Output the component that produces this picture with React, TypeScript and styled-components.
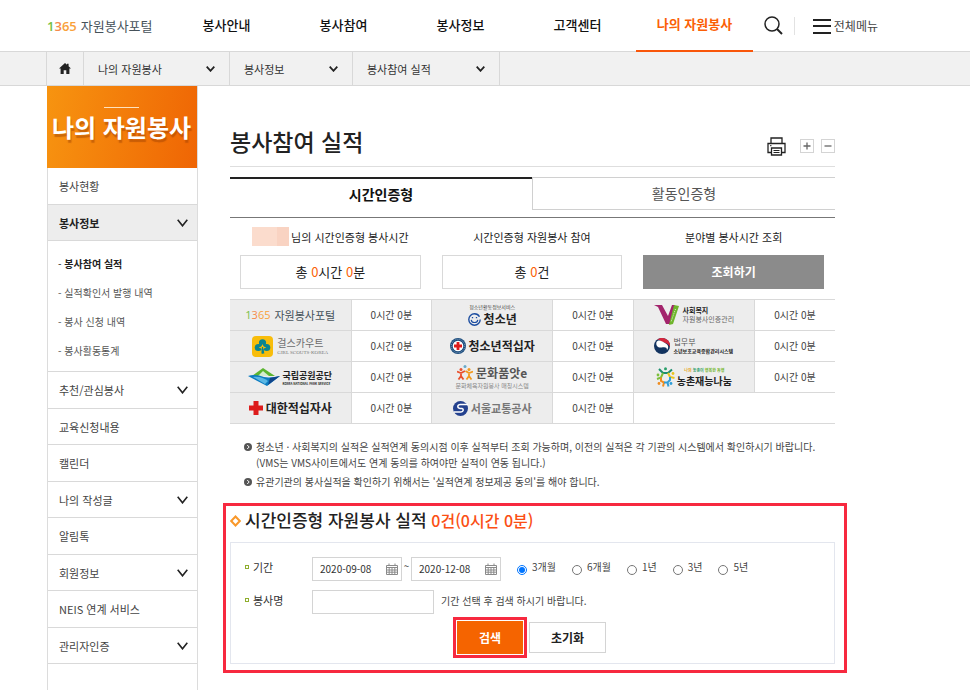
import React from 'react';
import styled, { createGlobalStyle } from 'styled-components';

const GlobalStyle = createGlobalStyle`
  *, *::before, *::after { box-sizing: border-box; }
  html, body { margin: 0; padding: 0; background: #fff; }
  body {
    font-family: 'Noto Sans CJK KR', 'Noto Sans', sans-serif;
    font-size: 11px;
    line-height: 16px;
    color: #444;
    overflow: hidden;
  }
  button, input { font: inherit; color: inherit; margin: 0; }
  button { padding: 0; border: 0; background: none; cursor: pointer; }
  a { color: inherit; text-decoration: none; }
  ul { margin: 0; padding: 0; list-style: none; }
  h1, h2, p { margin: 0; }
  svg { display: block; flex: none; }
`;

const Page = styled.div`
  height: 100vh;
  overflow: hidden;
  display: flex;
  flex-direction: column;
`;

/* ---------- header ---------- */

const Header = styled.header`
  display: flex;
  height: 51px;
  flex: none;
  padding: 0 92px 0 47px;
`;

const HomeLink = styled.a`
  display: flex;
  align-items: center;
  width: 121px;
`;

const Wordmark = styled.span<{ $small?: boolean }>`
  display: flex;
  align-items: center;
  gap: 4px;
  font-size: ${(p) => (p.$small ? 11 : 13)}px;
  line-height: 20px;
  font-weight: 400;
  color: #46525a;
  white-space: nowrap;
`;

const WordmarkDigits = styled.span<{ $small?: boolean }>`
  font-family: 'Open Sans', 'Noto Sans', sans-serif;
  font-size: ${(p) => (p.$small ? 11 : 13)}px;
  font-weight: ${(p) => (p.$small ? 400 : 600)};
  color: #f9a13b;
  i { font-style: normal; }
  i:nth-child(1) { color: #76c043; }
  i:nth-child(2) { color: #f58a4b; }
`;

const MainNav = styled.nav`
  display: flex;
  flex: 1;
`;

const NavLink = styled.a<{ $active?: boolean }>`
  flex: 1;
  height: 52px;
  line-height: ${(p) => (p.$active ? 48 : 50)}px;
  text-align: center;
  font-size: 13px;
  font-weight: ${(p) => (p.$active ? 700 : 500)};
  color: ${(p) => (p.$active ? '#fb5f06' : '#111')};
  border-bottom: 2px solid ${(p) => (p.$active ? '#f9560a' : 'transparent')};
  position: relative;
`;

const HeaderTools = styled.div`
  display: flex;
  align-items: center;
  justify-content: space-between;
  width: 125px;
  padding-left: 11px;
`;

const Divider = styled.span`
  width: 1px;
  height: 18px;
  background: #e2e2e2;
  margin-right: 6px;
`;

const AllMenu = styled.button`
  display: flex;
  align-items: center;
  gap: 3px;
  font-size: 12px;
  color: #444;
  white-space: nowrap;
`;

/* ---------- breadcrumb ---------- */

const Crumbs = styled.nav`
  display: flex;
  flex: none;
  height: 35px;
  padding-left: 46px;
  background: #f1f1f1;
  border-top: 1px solid #d8d8d8;
  border-bottom: 1px solid #d8d8d8;
`;

const CrumbHome = styled.a`
  display: flex;
  align-items: center;
  justify-content: center;
  width: 37px;
  border-left: 1px solid #d8d8d8;
`;

const Crumb = styled.button<{ $width: number }>`
  display: flex;
  align-items: center;
  justify-content: space-between;
  width: ${(p) => p.$width}px;
  padding: 0 14px;
  border-left: 1px solid #d8d8d8;
  color: #333;
  &:last-child { border-right: 1px solid #d8d8d8; }
`;

/* ---------- body ---------- */

const Body = styled.div`
  display: flex;
  flex: 1;
  min-height: 0;
  padding: 0 135px 0 47px;
`;

const Sidebar = styled.aside`
  width: 151px;
  flex: none;
  border: solid #dcdcdc;
  border-width: 0 1px;
`;

const Banner = styled.h2`
  display: flex;
  flex-direction: column;
  align-items: center;
  height: 82px;
  margin: 0 0 0 -1px;
  padding: 21px 1px 0 0;
  font-size: 24px;
  line-height: 38px;
  font-weight: 700;
  color: #fff;
  white-space: nowrap;
  text-shadow: 1px 3px 1px rgba(150, 60, 0, 0.45);
  background: linear-gradient(100deg, #f79410, #ef6504);
  &::before {
    content: '';
    width: 35px;
    height: 1px;
    background: #ffe2bd;
  }
`;

const SideItem = styled.li`
  border-bottom: 1px solid #d9d9d9;
  &:nth-child(odd) > a { height: 36px; }
`;

const SideLink = styled.a<{ $active?: boolean }>`
  display: flex;
  align-items: center;
  justify-content: space-between;
  height: 35px;
  padding: 0 9px 0 11px;
  font-weight: ${(p) => (p.$active ? 700 : 400)};
  color: ${(p) => (p.$active ? '#222' : '#444')};
  background: ${(p) => (p.$active ? '#ededed' : '#fff')};
`;

const SubList = styled.ul`
  padding: 8px 10px 6px;
  border-top: 1px solid #d9d9d9;
`;

const SubLink = styled.a<{ $active?: boolean }>`
  display: block;
  font-size: 10px;
  line-height: 29px;
  font-weight: ${(p) => (p.$active ? 700 : 400)};
  color: ${(p) => (p.$active ? '#222' : '#555')};
  white-space: nowrap;
  &::before { content: '- '; font-weight: 400; }
`;

const Main = styled.main`
  flex: 1;
  min-width: 0;
  padding-left: 32px;
`;

const TitleBar = styled.div`
  display: flex;
  justify-content: space-between;
  height: 81px;
  padding-top: 38px;
  border-bottom: 1px solid #dedede;
`;

const PageTitle = styled.h1`
  font-size: 23px;
  line-height: 34px;
  font-weight: 500;
  color: #222;
`;

const Tools = styled.div`
  display: flex;
  align-items: center;
  height: 44px;
  gap: 7px;
`;

const PrintButton = styled.button`
  margin-right: 7px;
`;

const ZoomButton = styled.button`
  display: flex;
  align-items: center;
  justify-content: center;
  width: 14px;
  height: 14px;
  border: 1px solid #d4d4d4;
  color: #666;
`;

const Tabs = styled.div`
  display: flex;
  align-items: flex-start;
  height: 41px;
  margin-top: 10px;
  border-bottom: 1px solid #777;
`;

const Tab = styled.button<{ $active?: boolean }>`
  flex: 1;
  height: 33px;
  padding-bottom: 2px;
  font-size: 14px;
  line-height: 20px;
  font-weight: ${(p) => (p.$active ? 700 : 400)};
  color: ${(p) => (p.$active ? '#111' : '#555')};
  border: solid ${(p) => (p.$active ? '#222' : '#d0d0d0')};
  border-width: ${(p) => (p.$active ? '2px 0 0' : '1px 0 1px 1px')};
`;

const Summary = styled.div`
  display: grid;
  grid-template-columns: repeat(3, 1fr);
  padding: 9px 0 10px;
`;

const SummaryColumn = styled.div`
  padding: 0 11px 0 10px;
  text-align: center;
`;

const SummaryLabel = styled.p`
  display: flex;
  align-items: center;
  justify-content: center;
  height: 19px;
  color: #222;
  white-space: nowrap;
`;

const MaskedName = styled.span`
  width: 37px;
  height: 19px;
  margin-right: 2px;
  background: linear-gradient(90deg, #fbdccd 68%, #f9d3c2 68%);
`;

const SummaryValue = styled.p`
  height: 34px;
  margin-top: 9px;
  border: 1px solid #d9d9d9;
  font-size: 13px;
  line-height: 32px;
  color: #222;
  em { font-style: normal; color: #fb5f06; }
`;

const LookupButton = styled.button`
  display: block;
  width: 100%;
  height: 34px;
  margin-top: 9px;
  background: #8b8b8b;
  color: #fff;
  font-size: 12px;
  font-weight: 700;
`;

const AgencyTable = styled.table`
  width: 100%;
  table-layout: fixed;
  border-collapse: collapse;
  border-bottom: 1px solid #c8c8c8;
  th, td {
    height: 31px;
    padding: 0;
    border: 1px solid #d9d9d9;
  }
  th { background: #ededed; font-weight: 400; }
  td { font-size: 10px; text-align: center; color: #444; }
  tr > :first-child { border-left: 0; }
  tr > :last-child { border-right: 0; }
`;

const LogoCol = styled.col`
  width: 20%;
`;

const BrandLine = styled.span<{ $gap?: number }>`
  display: flex;
  align-items: center;
  justify-content: center;
  gap: ${(p) => p.$gap ?? 3}px;
`;

const Brand = styled(BrandLine)`
  height: 30px;
`;

const BrandStack = styled.span<{ $center?: boolean }>`
  display: flex;
  flex-direction: column;
  align-items: ${(p) => (p.$center ? 'center' : 'flex-start')};
`;

const BrandText = styled.span<{ $size: number; $line: number; $weight?: number; $color?: string; $serif?: boolean }>`
  font-size: ${(p) => p.$size}px;
  line-height: ${(p) => p.$line}px;
  font-weight: ${(p) => p.$weight ?? 400};
  color: ${(p) => p.$color ?? '#222'};
  font-family: ${(p) => (p.$serif ? "'Liberation Serif', serif" : 'inherit')};
  white-space: nowrap;
`;

const Slogan = styled(BrandText)`
  i { font-style: normal; }
  i:nth-child(1) { color: #e8a61c; }
  i:nth-child(2) { color: #2ca06a; }
`;

const Notices = styled.ul`
  padding: 15px 0 13px 14px;
  font-size: 10px;
  color: #444;
`;

const Notice = styled.li`
  display: flex;
  gap: 4px;
  & + & { margin-top: 3px; }
  svg { margin-top: 4px; }
`;

const Highlight = styled.section`
  margin: 0 -12px 0 -7px;
  border: 3px solid #f7293f;
  padding: 0 9px 6px 4px;
`;

const ResultTitle = styled.h2`
  display: flex;
  align-items: center;
  gap: 4px;
  height: 29px;
  font-size: 17px;
  line-height: 24px;
  font-weight: 500;
  color: #222;
  white-space: nowrap;
  span { padding-bottom: 2px; }
  em { font-style: normal; font-size: 16px; color: #fb4f14; }
`;

const SearchForm = styled.form`
  margin-top: 7px;
  border: 1px solid #e3e6ee;
  padding: 14px 14px 5px;
`;

const FormRow = styled.div`
  display: flex;
  align-items: center;
  height: 24px;
  & + & { margin-top: 9px; }
`;

const FieldLabel = styled.label`
  display: flex;
  align-items: center;
  gap: 4px;
  width: 67px;
  flex: none;
  padding-bottom: 4px;
  color: #333;
  &::before {
    content: '';
    flex: none;
    width: 4px;
    height: 4px;
    border: 1px solid #8fae2e;
  }
`;

const DateBox = styled.span`
  display: flex;
  align-items: center;
  justify-content: space-between;
  flex: none;
  width: 90px;
  height: 24px;
  padding: 0 3px 0 7px;
  border: 1px solid #d4d4d4;
  input {
    width: 60px;
    padding: 0;
    border: 0;
    outline: 0;
    font-size: 10px;
    color: #333;
  }
`;

const Tilde = styled.span`
  width: 9px;
  text-align: center;
  font-size: 10px;
  line-height: 10px;
  align-self: flex-start;
  margin-top: 4px;
`;

const Periods = styled.div`
  display: flex;
  gap: 16px;
  margin-left: 16px;
  padding-bottom: 2px;
  font-size: 10px;
`;

const Period = styled.label`
  display: flex;
  align-items: center;
  gap: 5px;
  white-space: nowrap;
  input {
    width: 10px;
    height: 10px;
    margin-top: 4px;
  }
  span { margin-top: -2px; }
`;

const NameInput = styled.input`
  width: 122px;
  height: 24px;
  padding: 0 6px;
  border: 1px solid #d4d4d4;
`;

const Hint = styled.span`
  margin-left: 7px;
  padding-bottom: 2px;
  font-size: 10px;
`;

const Actions = styled.div`
  display: flex;
  align-items: center;
  justify-content: center;
  gap: 2px;
  margin: 3px 6px 0 0;
`;

const SubmitFrame = styled.span`
  border: 3px solid #f7293f;
  padding: 1px;
`;

const SubmitButton = styled.button`
  display: block;
  width: 66px;
  height: 33px;
  background: #f56400;
  color: #fff;
  font-size: 12px;
  font-weight: 700;
`;

const ResetButton = styled.button`
  width: 77px;
  height: 31px;
  border: 1px solid #d4d4d4;
  color: #222;
  font-size: 12px;
  font-weight: 700;
`;

/* ---------- icons ---------- */

const SearchIcon = () => (
  <svg width="19" height="19" viewBox="0 0 19 19" fill="none" stroke="#222" strokeWidth="1.5">
    <circle cx="8" cy="8" r="7" />
    <path d="M13 13l5 5" strokeWidth="2" />
  </svg>
);

const MenuIcon = () => (
  <svg width="18" height="16" viewBox="0 0 18 16" fill="#222">
    <path d="M0 1h18v2H0zM0 7h18v2H0zM0 14h18v2H0z" />
  </svg>
);

const HomeIcon = () => (
  <svg width="12" height="11" viewBox="0 0 12 11" fill="#222">
    <path d="M6 0l2 1.8V.8h1.6v2.4L12 5.6h-1.600V11H7.300V7.200H4.700V11H1.600V5.600H0z" />
  </svg>
);

const Chevron = ({ w = 9, h = 6, stroke = 1.8 }: { w?: number; h?: number; stroke?: number }) => (
  <svg width={w} height={h} viewBox={`0 0 ${w} ${h}`} fill="none" stroke="#222" strokeWidth={stroke}>
    <path d={`M.7 .7L${w / 2} ${h - 1.2}L${w - 0.7} .7`} />
  </svg>
);

const PrintIcon = () => (
  <svg width="19" height="19" viewBox="0 0 19 19" fill="none" stroke="#222" strokeWidth="1.3">
    <path d="M4 6.5V1h11v5.5M4.500 15.500H1V6.500h17v9h-3.500" />
    <path d="M4.500 11h10v7h-10z" />
    <path d="M6.500 13.500h6M6.500 15.500h6M3 8.700h1.500" strokeWidth="1" />
  </svg>
);

const PlusIcon = ({ minus }: { minus?: boolean }) => (
  <svg width="8" height="8" viewBox="0 0 8 8" stroke="currentColor" strokeWidth="1.300">
    <path d={minus ? 'M.5 4h7' : 'M.5 4h7M4 .5v7'} />
  </svg>
);

const BulletIcon = () => (
  <svg width="8" height="8" viewBox="0 0 8 8">
    <circle cx="4" cy="4" r="4" fill="#555" />
    <path d="M3.200 2l2 2-2 2" fill="none" stroke="#fff" strokeWidth="1" />
  </svg>
);

const DiamondIcon = () => (
  <svg width="11" height="12" viewBox="0 0 11 12">
    <path d="M5.500 1.500L9.800 6 5.500 10.500 1.200 6z" fill="#fff" stroke="#f9982a" strokeWidth="2" />
  </svg>
);

const CalendarIcon = () => (
  <svg width="12" height="12" viewBox="0 0 12 12" fill="none" stroke="#8a8a8a" strokeWidth="1">
    <path d="M.5 2.500h11v9H.5zM.5 4.500h11M.5 7h11M.5 9.200h11M3.200 4.500v7M6 4.500v7M8.800 4.500v7M3 .5v2M9 .5v2" />
  </svg>
);

const ScoutIcon = () => (
  <svg width="21" height="21" viewBox="0 0 21 21">
    <rect width="21" height="21" rx="4" fill="#f8bd0b" />
    <g fill="#0b8590">
      <circle cx="10.500" cy="6.800" r="3.600" />
      <circle cx="6.300" cy="11.500" r="3.600" />
      <circle cx="14.700" cy="11.500" r="3.600" />
      <path d="M9.700 11h1.600l1 6.500H9.500z" />
    </g>
    <path d="M10.500 8l1.200 2.600 2.600 1-2.600.8-1.200 1.800-1.200-1.800-2.600-.8 2.600-1z" fill="#f8bd0b" />
    <path d="M10.500 11v6.500" stroke="#0b8590" strokeWidth="1.200" />
  </svg>
);

const MountainIcon = () => (
  <svg width="32" height="18" viewBox="0 0 32 18">
    <path d="M4 8L15 0l12 8z" fill="#5cb531" />
    <path d="M10 8l5-5 6 5z" fill="#d5ecd0" />
    <path d="M0 8c5-2 11-1 16 1 5 1 11 0 16-1L19 18z" fill="#0c7cc1" />
    <path d="M5 9c6-1 11 1 15 4l-3 3z" fill="#5ab7e4" />
    <path d="M22 10l10-2-12 9z" fill="#10458a" />
  </svg>
);

const CrossIcon = () => (
  <svg width="14" height="14" viewBox="0 0 14 14" fill="#dd1c1c">
    <path d="M4.500 0h5v4.500H14v5H9.500V14h-5V9.500H0v-5h4.500z" />
  </svg>
);

const SmileIcon = () => (
  <svg width="13" height="13" viewBox="0 0 13 13" fill="none" stroke="#1c4da0">
    <circle cx="6.500" cy="6.500" r="5.700" strokeWidth="1.400" strokeDasharray="32 4" />
    <path d="M3.200 6.800c.6 3.600 6 3.600 6.600 0" strokeWidth="1.200" />
    <path d="M4.500 4v1.200M8.500 4v1.200" strokeWidth="1.300" />
  </svg>
);

const JuniorCrossIcon = () => (
  <svg width="16" height="16" viewBox="0 0 16 16">
    <circle cx="8" cy="8" r="8" fill="#1a4b7d" />
    <circle cx="8" cy="8" r="6.700" fill="none" stroke="#8ba7c2" strokeWidth="1" strokeDasharray="1 1" />
    <circle cx="8" cy="8" r="5.300" fill="#fff" />
    <path d="M6.600 4h2.800v2.600H12v2.800H9.400V12H6.600V9.400H4V6.600h2.600z" fill="#dd1c1c" />
  </svg>
);

const CultureIcon = () => (
  <svg width="16" height="15" viewBox="0 0 16 15" fill="none" strokeWidth="1.800">
    <circle cx="8" cy="1.600" r="1.500" fill="#68aacb" />
    <circle cx="4" cy="4.500" r="1.500" fill="#e9512e" />
    <circle cx="12" cy="4.500" r="1.500" fill="#f29a1f" />
    <path d="M0 6.500l4 1.500 4-2M4 8v3l-2.500 3.500M4 11l2.500 3.500" stroke="#e9512e" />
    <path d="M8.500 6l3.500 2 4-1.500M12 8v3l-2.500 3.500M12 11l2.500 3.500" stroke="#f29a1f" />
  </svg>
);

const MetroIcon = () => (
  <svg width="15" height="15" viewBox="0 0 15 15">
    <circle cx="7.500" cy="7.500" r="7.500" fill="#24418e" />
    <path d="M15 3.500H7.500C4 3.500 4 7 7 7.500h2c2 .5 1.500 3.500-1 3.500H1" fill="none" stroke="#fff" strokeWidth="1.500" />
  </svg>
);

const VolunteerIcon = () => (
  <svg width="26" height="20" viewBox="0 0 26 20">
    <path d="M0 0h8l6 11 4-11h3l-5 19h-4L4 2z" fill="#a3246c" />
    <path d="M20 0l5 1-6 18-4 1z" fill="#6fb52c" />
    <path d="M21.500 4l-4.500 13" stroke="#e1f0cf" strokeWidth="1" strokeDasharray="1 1" />
  </svg>
);

const TaegeukIcon = () => (
  <svg width="16" height="16" viewBox="0 0 16 16">
    <circle cx="8" cy="8" r="8" fill="#12335f" />
    <path d="M3 1.800A8 8 0 0 1 16 9C14 4 9 5 7 3.200 5.500 1.800 4 1.500 3 1.800z" fill="#d4273e" />
    <path d="M2.500 4C5 1 8 3.500 10 4.500 14 6 15.500 9 13 12 13 8.500 10 9 7.500 9.500 4 10 1.500 7.500 2.500 4z" fill="#fff" />
  </svg>
);

const VillageIcon = () => (
  <svg width="19" height="20" viewBox="0 0 19 20" fill="none" strokeWidth="2">
    <circle cx="9.500" cy="1.700" r="1.500" fill="#2ca06a" />
    <circle cx="2" cy="8" r="1.400" fill="#7bbf3a" />
    <circle cx="17" cy="6.500" r="1.400" fill="#e9c51d" />
    <circle cx="3" cy="16.500" r="1.400" fill="#f08c1e" />
    <circle cx="15" cy="16.500" r="1.400" fill="#2f9ed8" />
    <path d="M3 2l4 4h5l4-3.500" stroke="#1d8f6e" />
    <path d="M1 12l4-1.500L7 6" stroke="#7bbf3a" />
    <path d="M12 6l2 4 4.500 1" stroke="#e9c51d" />
    <path d="M5 10.500V14l3 1.500-1 4" stroke="#f08c1e" />
    <path d="M8 15.500h3.500L14 13v-3M11.500 15.500l1 4" stroke="#2f9ed8" />
  </svg>
);

/* ---------- data ---------- */

const PortalLogo = ({ small }: { small?: boolean }) => (
  <Wordmark $small={small}>
    <WordmarkDigits $small={small}>
      <i>1</i><i>3</i>65
    </WordmarkDigits>
    자원봉사포털
  </Wordmark>
);

const agencies: React.ReactNode[][] = [
  [
    <Brand key="portal"><PortalLogo small /></Brand>,
    <Brand key="youth">
      <BrandStack $center>
        <BrandText $size={5} $line={8} $color="#444">청소년활동정보서비스</BrandText>
        <BrandLine>
          <SmileIcon />
          <BrandText $size={12} $line={16} $weight={700}>청소년</BrandText>
        </BrandLine>
      </BrandStack>
    </Brand>,
    <Brand key="welfare">
      <VolunteerIcon />
      <BrandStack>
        <BrandText $size={7} $line={9} $weight={700}>사회복지</BrandText>
        <BrandText $size={7} $line={9} $color="#666">자원봉사인증관리</BrandText>
      </BrandStack>
    </Brand>,
  ],
  [
    <Brand key="scout" $gap={4}>
      <ScoutIcon />
      <BrandStack>
        <BrandText $size={10} $line={14} $color="#6b6b6b">걸스카우트</BrandText>
        <BrandText $size={5} $line={6} $color="#777" $serif>GIRL SCOUTS·KOREA</BrandText>
      </BrandStack>
    </Brand>,
    <Brand key="junior"><JuniorCrossIcon /><BrandText $size={12} $line={16} $weight={700}>청소년적십자</BrandText></Brand>,
    <Brand key="justice">
      <TaegeukIcon />
      <BrandStack>
        <BrandText $size={8} $line={10} $color="#555">법무부</BrandText>
        <BrandText $size={5} $line={8} $weight={700}>소년보호교육종합관리시스템</BrandText>
      </BrandStack>
    </Brand>,
  ],
  [
    <Brand key="park" $gap={2}>
      <MountainIcon />
      <BrandStack>
        <BrandText $size={9} $line={13} $weight={700}>국립공원공단</BrandText>
        <BrandText $size={3} $line={4} $weight={700}>KOREA NATIONAL PARK SERVICE</BrandText>
      </BrandStack>
    </Brand>,
    <Brand key="culture">
      <BrandStack $center>
        <BrandLine>
          <CultureIcon />
          <BrandText $size={12} $line={16} $weight={700} $color="#555">문화품앗e</BrandText>
        </BrandLine>
        <BrandText $size={6} $line={9} $color="#888">문화체육자원봉사 매칭시스템</BrandText>
      </BrandStack>
    </Brand>,
    <Brand key="village" $gap={2}>
      <VillageIcon />
      <BrandStack $center>
        <Slogan $size={4} $line={6} $weight={700} $color="#74b52b"><i>나의</i> <i>농촌이</i> 행복한 동행</Slogan>
        <BrandText $size={10} $line={15} $weight={700}>농촌재능나눔</BrandText>
      </BrandStack>
    </Brand>,
  ],
  [
    <Brand key="redcross"><CrossIcon /><BrandText $size={12} $line={16} $weight={700}>대한적십자사</BrandText></Brand>,
    <Brand key="metro"><MetroIcon /><BrandText $size={11} $line={16} $weight={700} $color="#777">서울교통공사</BrandText></Brand>,
  ],
];

const sideMenu: { label: string; arrow?: boolean; sub?: string[] }[] = [
  { label: '봉사현황' },
  { label: '봉사정보', arrow: true, sub: ['봉사참여 실적', '실적확인서 발행 내역', '봉사 신청 내역', '봉사활동통계'] },
  { label: '추천/관심봉사', arrow: true },
  { label: '교육신청내용' },
  { label: '캘린더' },
  { label: '나의 작성글', arrow: true },
  { label: '알림톡' },
  { label: '회원정보', arrow: true },
  { label: 'NEIS 연계 서비스' },
  { label: '관리자인증', arrow: true },
];

const crumbs = [
  { label: '나의 자원봉사', width: 146 },
  { label: '봉사정보', width: 123 },
  { label: '봉사참여 실적', width: 148 },
];

const periods = ['3개월', '6개월', '1년', '3년', '5년'];

export default function App() {
  return (
    <Page lang="ko">
      <GlobalStyle />
      <Header>
        <HomeLink href="#"><PortalLogo /></HomeLink>
        <MainNav>
          {['봉사안내', '봉사참여', '봉사정보', '고객센터'].map((n) => <NavLink key={n} href="#">{n}</NavLink>)}
          <NavLink href="#" $active>나의 자원봉사</NavLink>
        </MainNav>
        <HeaderTools>
          <button type="button" aria-label="검색"><SearchIcon /></button>
          <Divider />
          <AllMenu type="button"><MenuIcon />전체메뉴</AllMenu>
        </HeaderTools>
      </Header>
      <Crumbs>
        <CrumbHome href="#" aria-label="홈"><HomeIcon /></CrumbHome>
        {crumbs.map((c) => (
          <Crumb key={c.label} type="button" $width={c.width}>{c.label}<Chevron /></Crumb>
        ))}
      </Crumbs>
      <Body>
        <Sidebar>
          <Banner>나의 자원봉사</Banner>
          <ul>
            {sideMenu.map((m) => (
              <SideItem key={m.label}>
                <SideLink href="#" $active={!!m.sub}>
                  {m.label}
                  {m.arrow && <Chevron w={11} h={8} stroke={1.6} />}
                </SideLink>
                {m.sub && (
                  <SubList>
                    {m.sub.map((s, i) => <li key={s}><SubLink href="#" $active={i === 0}>{s}</SubLink></li>)}
                  </SubList>
                )}
              </SideItem>
            ))}
          </ul>
        </Sidebar>
        <Main>
          <TitleBar>
            <PageTitle>봉사참여 실적</PageTitle>
            <Tools>
              <PrintButton type="button" aria-label="인쇄"><PrintIcon /></PrintButton>
              <ZoomButton type="button" aria-label="확대"><PlusIcon /></ZoomButton>
              <ZoomButton type="button" aria-label="축소"><PlusIcon minus /></ZoomButton>
            </Tools>
          </TitleBar>
          <Tabs>
            <Tab type="button" $active>시간인증형</Tab>
            <Tab type="button">활동인증형</Tab>
          </Tabs>
          <Summary>
            <SummaryColumn>
              <SummaryLabel><MaskedName />님의 시간인증형 봉사시간</SummaryLabel>
              <SummaryValue>총 <em>0</em>시간 <em>0</em>분</SummaryValue>
            </SummaryColumn>
            <SummaryColumn>
              <SummaryLabel>시간인증형 자원봉사 참여</SummaryLabel>
              <SummaryValue>총 <em>0</em>건</SummaryValue>
            </SummaryColumn>
            <SummaryColumn>
              <SummaryLabel>분야별 봉사시간 조회</SummaryLabel>
              <LookupButton type="button">조회하기</LookupButton>
            </SummaryColumn>
          </Summary>
          <AgencyTable>
            <colgroup>
              <LogoCol /><col /><LogoCol /><col /><LogoCol /><col />
            </colgroup>
            <tbody>
              {agencies.map((row, r) => (
                <tr key={r}>
                  {row.map((brand, i) => (
                    <React.Fragment key={i}>
                      <th scope="row">{brand}</th>
                      <td>0시간 0분</td>
                    </React.Fragment>
                  ))}
                  {row.length < 3 && <td colSpan={2} />}
                </tr>
              ))}
            </tbody>
          </AgencyTable>
          <Notices>
            <Notice>
              <BulletIcon />
              <p>
                청소년 · 사회복지의 실적은 실적연계 동의시점 이후 실적부터 조회 가능하며, 이전의 실적은 각 기관의 시스템에서 확인하시기 바랍니다.
                <br />
                (VMS는 VMS사이트에서도 연계 동의를 하여야만 실적이 연동 됩니다.)
              </p>
            </Notice>
            <Notice>
              <BulletIcon />
              <p>유관기관의 봉사실적을 확인하기 위해서는 '실적연계 정보제공 동의'를 해야 합니다.</p>
            </Notice>
          </Notices>
          <Highlight>
            <ResultTitle><DiamondIcon /><span>시간인증형 자원봉사 실적 <em>0건(0시간 0분)</em></span></ResultTitle>
            <SearchForm onSubmit={(e) => e.preventDefault()}>
              <FormRow>
                <FieldLabel htmlFor="from">기간</FieldLabel>
                <DateBox>
                  <input id="from" type="text" defaultValue="2020-09-08" />
                  <button type="button" aria-label="시작일 선택"><CalendarIcon /></button>
                </DateBox>
                <Tilde>~</Tilde>
                <DateBox>
                  <input type="text" aria-label="종료일" defaultValue="2020-12-08" />
                  <button type="button" aria-label="종료일 선택"><CalendarIcon /></button>
                </DateBox>
                <Periods>
                  {periods.map((p, i) => (
                    <Period key={p}>
                      <input type="radio" name="period" defaultChecked={i === 0} />
                      <span>{p}</span>
                    </Period>
                  ))}
                </Periods>
              </FormRow>
              <FormRow>
                <FieldLabel htmlFor="title">봉사명</FieldLabel>
                <NameInput id="title" type="text" />
                <Hint>기간 선택 후 검색 하시기 바랍니다.</Hint>
              </FormRow>
              <Actions>
                <SubmitFrame><SubmitButton type="submit">검색</SubmitButton></SubmitFrame>
                <ResetButton type="reset">초기화</ResetButton>
              </Actions>
            </SearchForm>
          </Highlight>
        </Main>
      </Body>
    </Page>
  );
}
